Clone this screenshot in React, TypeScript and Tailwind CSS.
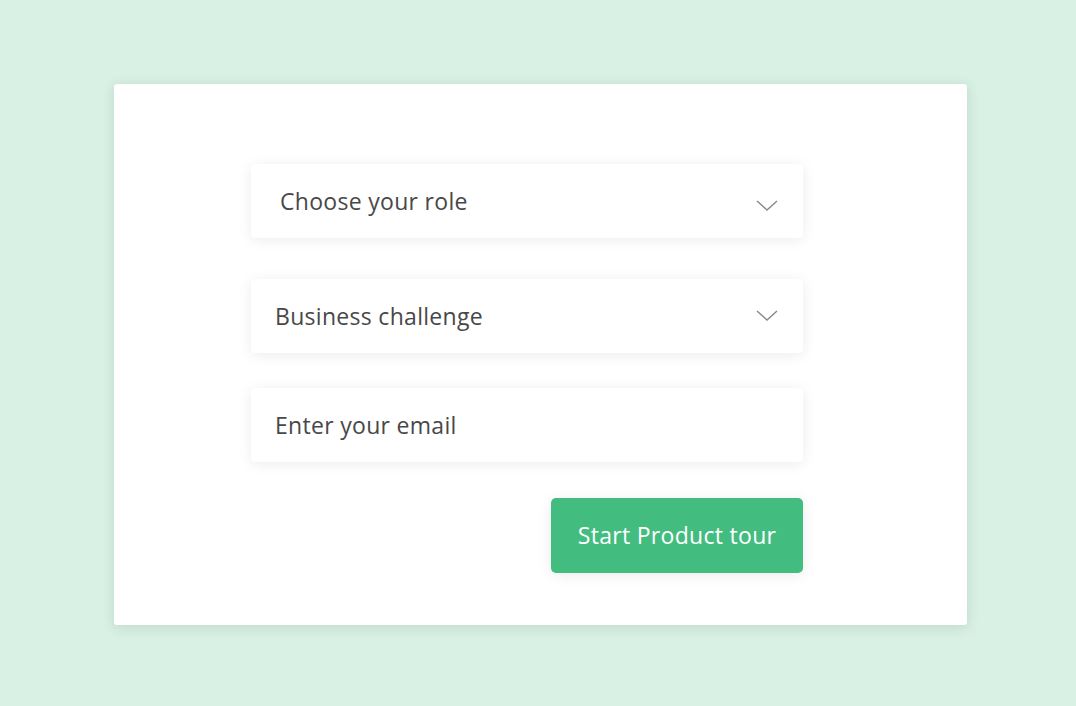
const Chevron = () => (
  <svg width="22" height="12" viewBox="0 0 22 12" fill="none" className="shrink-0">
    <path d="M1 1l10 9 10-9" stroke="#8a8a8a" strokeWidth="1.5" />
  </svg>
);

export default function App() {
  return (
    <div
      className="flex h-[706px] w-full items-start bg-[#d9f0e4] pl-[114px] pt-[84px]"
      style={{ fontFamily: '"Open Sans", "Liberation Sans", sans-serif' }}
    >
      <div className="flex h-[541px] w-[853px] flex-col rounded-[3px] bg-white pl-[137px] pt-[80px] shadow-[0_2px_12px_rgba(60,110,80,0.18)]">
        <div className="flex w-[552px] flex-col">
          <div className="flex h-[74px] items-center justify-between rounded-[4px] bg-white pl-[29px] pr-[25px] shadow-[0_2px_14px_rgba(0,0,0,0.08)]">
            <span className="text-[23px] tracking-[0.3px] text-[#484848]">Choose your role</span>
            <span className="mt-[10px]">
              <Chevron />
            </span>
          </div>
          <div className="mt-[41px] flex h-[74px] items-center justify-between rounded-[4px] bg-white pl-[24px] pr-[25px] shadow-[0_2px_14px_rgba(0,0,0,0.08)]">
            <span className="text-[23px] tracking-[0.3px] text-[#484848]">Business challenge</span>
            <Chevron />
          </div>
          <div className="mt-[35px] flex h-[74px] items-center rounded-[4px] bg-white pl-[24px] shadow-[0_2px_14px_rgba(0,0,0,0.08)]">
            <span className="text-[23px] tracking-[0.3px] text-[#484848]">Enter your email</span>
          </div>
          <div className="mt-[36px] flex justify-end">
            <button className="h-[75px] w-[252px] rounded-[5px] bg-[#42bd7f] text-[23px] tracking-[0.3px] text-white shadow-[0_2px_14px_rgba(0,0,0,0.08)]">
              Start Product tour
            </button>
          </div>
        </div>
      </div>
    </div>
  );
}
